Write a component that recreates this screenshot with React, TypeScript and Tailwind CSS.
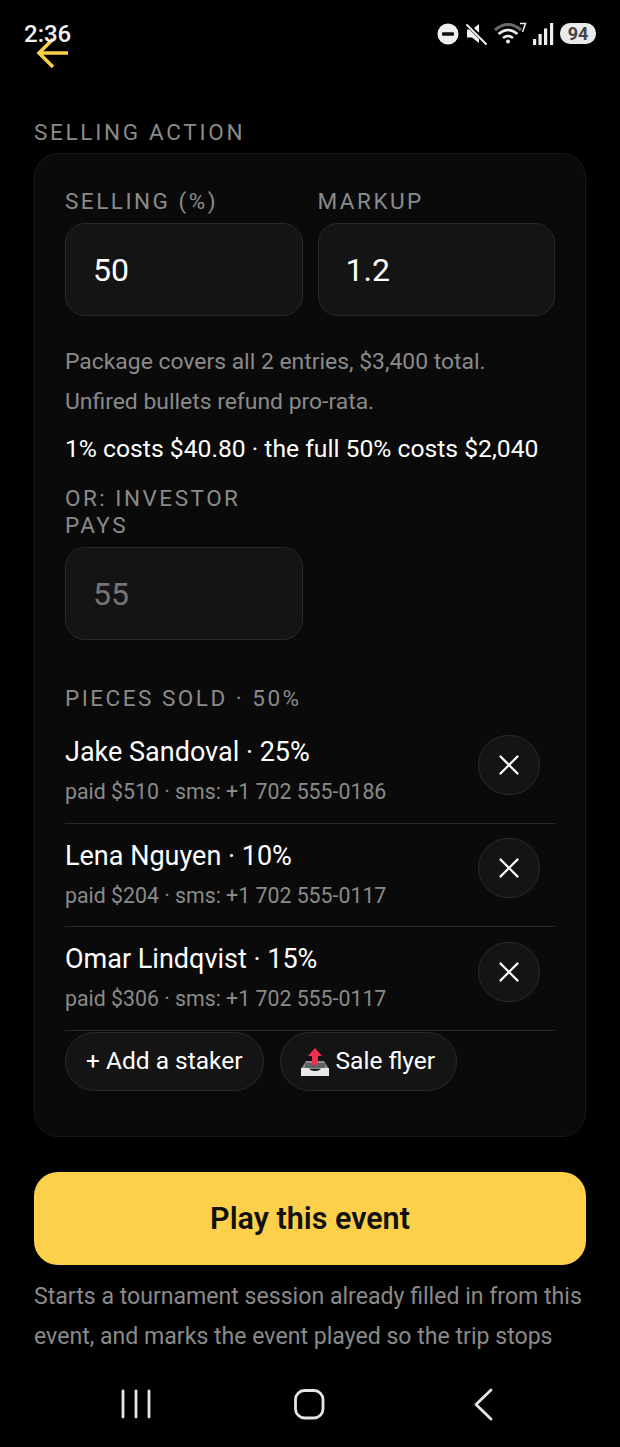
import { X } from 'lucide-react';

const stakers = [
  { name: 'Jake Sandoval · 25%', sub: 'paid $510 · sms: +1 702 555-0186' },
  { name: 'Lena Nguyen · 10%', sub: 'paid $204 · sms: +1 702 555-0117' },
  { name: 'Omar Lindqvist · 15%', sub: 'paid $306 · sms: +1 702 555-0117' },
];

function StatusBar() {
  return (
    <div className="absolute top-0 left-0 right-0 h-[60px]">
      <span className="absolute left-[24px] top-[20px] text-[24px] leading-[28px] font-medium text-[#f2f2f2]">2:36</span>
      <svg className="absolute left-[430px] top-[16px]" width="130" height="36" viewBox="0 0 130 36">
        <circle cx="18" cy="18" r="10.5" fill="#efefef" />
        <rect x="12" y="16.2" width="12" height="3.6" rx="1" fill="#111" />
        <path d="M37 13.500h5l7-5.500v19l-7-5.500h-5z" fill="#efefef" />
        <path d="M36 7l21 21" stroke="#000" strokeWidth="4.5" />
        <path d="M37 9l19 19" stroke="#efefef" strokeWidth="2" strokeLinecap="round" />
        <path d="M65 14q13-11 26 0" stroke="#6b6b6b" strokeWidth="3" fill="none" />
        <path d="M68.500 18q9.500-8 19 0" stroke="#efefef" strokeWidth="2.600" fill="none" />
        <path d="M73 22q5-4 10 0" stroke="#efefef" strokeWidth="2.600" fill="none" />
        <circle cx="78" cy="25.500" r="2" fill="#efefef" />
        <path d="M90 7.500h5.500l-3 8.500" stroke="#efefef" strokeWidth="1.500" fill="none" />
        <rect x="103" y="23" width="3.200" height="6" fill="#efefef" />
        <rect x="108.500" y="18" width="3.200" height="11" fill="#efefef" />
        <rect x="114" y="12.500" width="3.200" height="16.500" fill="#efefef" />
        <rect x="120" y="7" width="3.200" height="22" fill="#efefef" />
      </svg>
      <span className="absolute left-[560px] top-[23px] w-[36px] h-[21px] rounded-[10px] bg-[#e9e9e9] text-[#444] text-[18px] leading-[21px] font-bold text-center">94</span>
    </div>
  );
}

function NavBar() {
  return (
    <div className="absolute bottom-0 left-0 right-0 h-[93px] bg-black flex items-start justify-center">
      <svg width="620" height="93" viewBox="0 0 620 93" fill="none" stroke="#e4e4e4" strokeWidth="2.800" strokeLinecap="round" strokeLinejoin="round">
        <path d="M123 37v26M136 37v26M149 37v26" />
        <rect x="295.500" y="36.500" width="27.500" height="27.500" rx="9" />
        <path d="M491 36l-15 14.500 15 14.500" />
      </svg>
    </div>
  );
}

function Field({ label, value, dim }: { label: string; value: string; dim?: boolean }) {
  return (
    <div className="flex flex-col">
      <div className="text-[22.500px] leading-[27px] tracking-[2.500px] text-[#8a8a8a] mb-[8px]">{label}</div>
      <div className={`h-[93px] rounded-[20px] border border-[#2a2a2a] bg-[#141414] pl-[27px] flex items-center text-[32px] ${dim ? 'text-[#757575]' : 'text-white'}`}>
        {value}
      </div>
    </div>
  );
}

function FlyerIcon() {
  return (
    <svg width="30" height="30" viewBox="0 0 30 30">
      <path d="M6 14h18l5 8H1z" fill="#8b8f94" />
      <path d="M5 16h20v5H5z" fill="#5f6367" />
      <path d="M1 21h8q1 3 6 3t6-3h8v8H1z" fill="#e8e8ea" />
      <path d="M15 1l7 8h-4v9h-6V9H8z" fill="#f0304f" />
    </svg>
  );
}

export default function App() {
  return (
    <div className="relative w-[620px] h-[1447px] overflow-hidden bg-black font-['Roboto',sans-serif]">
      <StatusBar />
      <div className="px-[34px] pt-[34px]">
        <svg width="38" height="38" viewBox="0 0 38 38" fill="none" stroke="#fdd04b" strokeWidth="3.500">
          <path d="M34 19H5.500M19 5L5 19l14 14" />
        </svg>
        <div className="mt-[46px] text-[22.500px] leading-[28px] tracking-[2.700px] text-[#8a8a8a]">SELLING ACTION</div>
        <div className="mt-[7px] rounded-[24px] border border-[#181818] bg-[#0a0a0a] pl-[30px] pr-[30px] pt-[34px] h-[984px]">
          <div className="grid grid-cols-2 gap-x-[15px]">
            <Field label="SELLING (%)" value="50" />
            <Field label="MARKUP" value="1.2" />
          </div>
          <p className="mt-[26px] text-[22.900px] leading-[40px] text-[#8a8a8a]">
            Package covers all 2 entries, $3,400 total.
            <br />
            Unfired bullets refund pro-rata.
          </p>
          <p className="mt-[7px] text-[24.700px] leading-[40px] text-white">1% costs $40.80 · the full 50% costs $2,040</p>
          <div className="mt-[16px] grid grid-cols-2 gap-x-[15px]">
            <div className="[&>div>div:first-child]:w-[200px]">
              <Field label="OR: INVESTOR PAYS" value="55" dim />
            </div>
          </div>
          <div className="mt-[44px] text-[22.500px] leading-[28px] tracking-[2.500px] text-[#8a8a8a]">PIECES SOLD · 50%</div>
          <div className="mt-[8px]">
            {stakers.map((s) => (
              <div key={s.name} className="h-[103.500px] border-b border-[#2a2a2a] flex items-center justify-between pr-[15px]">
                <div className="pt-[2px]">
                  <div className="text-[27px] leading-[40px] text-white">{s.name}</div>
                  <div className="text-[21.300px] leading-[40px] text-[#8a8a8a]">{s.sub}</div>
                </div>
                <button className="-mt-[13px] w-[62px] h-[60px] rounded-full border border-[#2a2a2a] bg-[#141414] flex items-center justify-center">
                  <X size={34} color="#fff" strokeWidth={1.6} />
                </button>
              </div>
            ))}
          </div>
          <div className="mt-[1px] flex gap-[16px]">
            <button className="h-[59px] px-[20px] pt-[1px] rounded-full border border-[#2a2a2a] bg-[#141414] text-[24.500px] text-white">+ Add a staker</button>
            <button className="h-[59px] pl-[19px] pr-[21px] pt-[1px] rounded-full border border-[#2a2a2a] bg-[#141414] text-[24.500px] text-white flex items-center gap-[6px]">
              <FlyerIcon />
              Sale flyer
            </button>
          </div>
        </div>
        <button className="mt-[35px] w-full h-[93px] pt-[1px] rounded-[24px] bg-[#fdd04b] text-[#111] text-[30.500px] font-semibold">Play this event</button>
        <p className="mt-[12px] text-[23.100px] leading-[40px] text-[#8a8a8a]">
          Starts a tournament session already filled in from this event, and marks the event played so the trip stops
        </p>
      </div>
      <NavBar />
    </div>
  );
}
